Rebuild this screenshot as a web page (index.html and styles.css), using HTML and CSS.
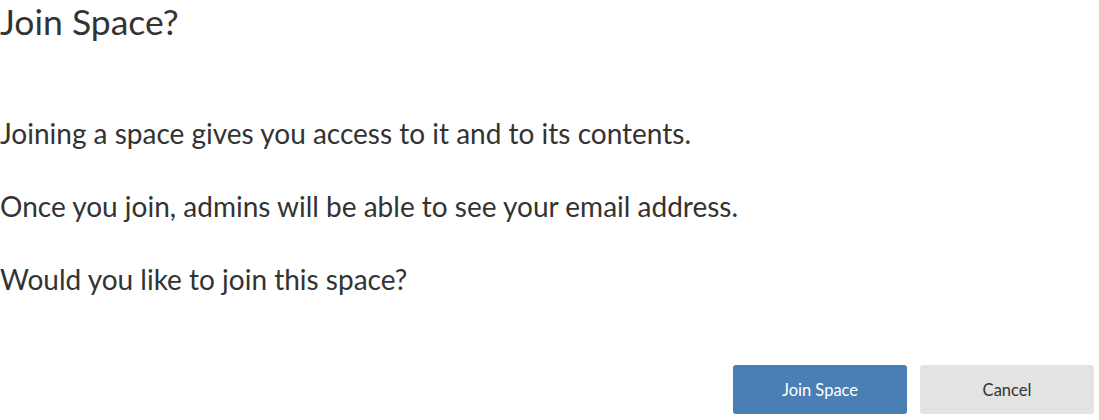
FILE: index.html
```html
<!DOCTYPE html>
<html>
<head>
<meta charset="utf-8">
<link rel="stylesheet" href="styles.css">
</head>
<body>
<div class="dialog">
  <h1 class="title">Join Space?</h1>
  <div class="content">
    <p class="para">Joining a space gives you access to it and to its contents.</p>
    <p class="para">Once you join, admins will be able to see your email address.</p>
    <p class="para">Would you like to join this space?</p>
  </div>
  <div class="actions">
    <button class="btn btn-primary">Join Space</button>
    <button class="btn btn-secondary">Cancel</button>
  </div>
</div>
</body>
</html>
```
FILE: styles.css
```css
html, body {
  margin: 0;
  padding: 0;
  background: #fff;
}
body {
  font-family: Lato, "Open Sans", sans-serif;
  color: #333;
}
.dialog {
  width: 1099px;
  height: 420px;
  display: flex;
  flex-direction: column;
}
.title {
  margin: 0;
  font-size: 35.5px;
  font-weight: 400;
  line-height: 44px;
}
.content {
  padding-top: 71px;
  display: flex;
  flex-direction: column;
  gap: 37px;
}
.para {
  margin: 0;
  font-size: 28px;
  line-height: 36px;
}
.actions {
  margin-top: auto;
  display: flex;
  justify-content: flex-end;
  gap: 13px;
  padding-right: 5px;
  padding-bottom: 6px;
}
.btn {
  width: 174px;
  height: 49px;
  border: none;
  border-radius: 3px;
  font-family: Lato, sans-serif;
  font-size: 16.5px;
}
.btn-primary {
  background: #4a7fb5;
  color: #fff;
}
.btn-secondary {
  background: #e3e3e3;
  color: #333;
}
```
